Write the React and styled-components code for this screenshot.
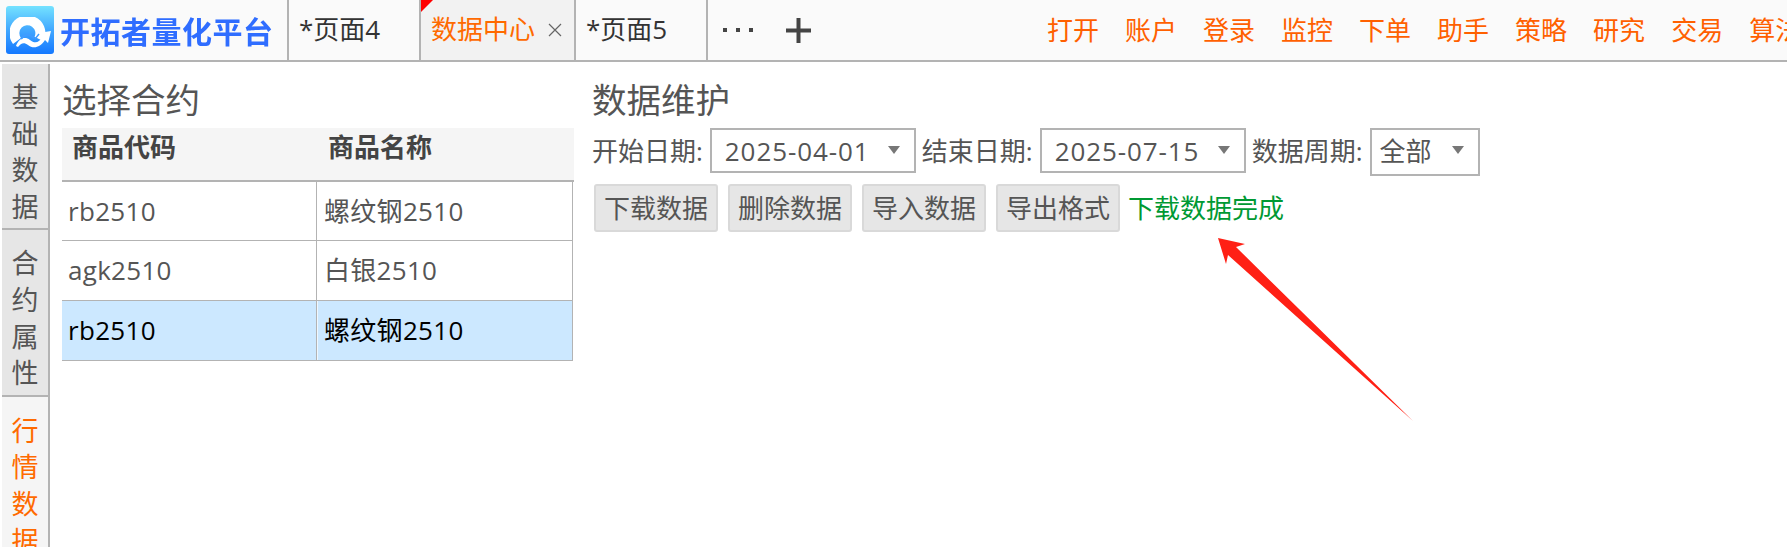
import React from "react";
import styled, { createGlobalStyle } from "styled-components";

const Global = createGlobalStyle`
  html, body { margin: 0; padding: 0; background: #fff; }
  body { width: 1787px; height: 547px; overflow: hidden; font-family: "Open Sans", "Noto Sans CJK SC", sans-serif; font-size: 26px; color: #555; }
  * { box-sizing: border-box; }
`;

const Page = styled.div`
  width: 1787px; height: 547px; overflow: hidden; display: flex; flex-direction: column; position: relative;
`;
const TopBar = styled.div`
  height: 62px; flex: none; display: flex; align-items: stretch; background: #fafafa; border-bottom: 2px solid #b3b3b3; overflow: hidden;
`;
const Brand = styled.div`
  width: 287px; flex: none; display: flex; align-items: center; padding-left: 6px; gap: 6px;
`;
const BrandName = styled.span`
  font-size: 30px; line-height: 40px; font-weight: 700; letter-spacing: 0.5px; white-space: nowrap; filter: blur(0.7px);
  font-family: "Noto Sans CJK SC", sans-serif;
  color: #2f6dff;
`;
const Tab = styled.div`
  width: ${p => p.$w}px; flex: none; position: relative; display: flex; align-items: center; padding-left: 10px; border-left: 2px solid #b3b3b3;
  background: ${p => p.$active ? "#f2f2f2" : "#fafafa"}; color: ${p => p.$active ? "#ff6a00" : "#333"}; line-height: 60px; padding-bottom: 2px; white-space: nowrap;
`;
const Corner = styled.i`
  position: absolute; left: 0; top: 0; width: 0; height: 0; border-top: 12px solid #f00; border-right: 12px solid transparent;
`;
const Close = styled.svg`
  width: 14px; height: 14px; margin-left: 13px; margin-top: 2px; flex: none;
`;
const TabTools = styled.div`
  width: 341px; flex: none; border-left: 2px solid #b3b3b3; display: flex; align-items: center; padding-left: 15px; gap: 33px;
`;
const Menu = styled.nav`
  display: flex; gap: 26px; flex: none; align-items: center; color: #ff6000; white-space: nowrap; padding-bottom: 2px;
`;
const Body = styled.div`
  flex: 1; display: flex; padding: 2px 0 0 2px; min-height: 0;
`;
const Sidebar = styled.div`
  width: 48px; flex: none; border-right: 2px solid #b3b3b3; display: flex; flex-direction: column; overflow: hidden;
`;
const SideItem = styled.div`
  flex: none; display: flex; flex-direction: column; align-items: center; padding: ${p => p.$active ? "16px 0 0" : "15px 0 3px"};
  background: ${p => p.$active ? "#f5f5f5" : "#e6e6e6"}; color: ${p => p.$active ? "#ff6a00" : "#555"};
  font-size: 27px; line-height: 36.6px; border-bottom: ${p => p.$active ? "0" : "2px solid #b3b3b3"};
`;
const Main = styled.div`
  flex: 1; display: flex; padding: 0 0 0 12px; gap: 18px; align-items: flex-start;
`;
const Left = styled.section` width: 512px; flex: none; `;
const Right = styled.section` flex: 1; `;
const Title = styled.h2`
  margin: 0; font-size: 34.5px; font-weight: 400; line-height: 72px; height: 64px; color: #555;
`;
const Table = styled.div` width: 512px; `;
const Head = styled.div`
  display: grid; grid-template-columns: 255px 257px; height: 54px; background: #f5f5f5; border-bottom: 2px solid #b3b3b3; font-weight: 700; color: #444; line-height: 38px;
  & > span { padding-left: 10px; }
  & > span + span { padding-left: 11px; }
`;
const Row = styled.div`
  display: grid; grid-template-columns: 254px 257px; width: 511px; height: ${p => p.$h || 60}px; line-height: 58px; border-bottom: 1px solid #b3b3b3; border-right: 1px solid #b3b3b3; letter-spacing: 0.3px;
  background: ${p => p.$sel ? "#cce8ff" : "#fff"}; color: ${p => p.$sel ? "#000" : "#555"};
`;
const Cell = styled.div`
  padding-left: 6px;
`;
const NameCell = styled.div`
  padding-left: 7px; border-left: 1px solid #b3b3b3;
  box-shadow: ${p => p.$sel ? "inset 1px 0 0 #eef7ff" : "none"};
`;
const Filters = styled.div`
  display: flex; align-items: flex-start; height: 56px;
`;
const Label = styled.span`
  line-height: 46px; margin: ${p => p.$m || "0"}; white-space: nowrap;
`;
const Select = styled.div`
  width: ${p => p.$w}px; height: ${p => p.$h || 45}px; flex: none; border: 2px solid #b3b3b3; background: #fff; position: relative; line-height: 42px; padding-left: ${p => p.$pl || 13}px; color: #555; letter-spacing: ${p => p.$ls || 0}px; margin-left: ${p => p.$ml || 0}px;
`;
const Caret = styled.i`
  position: absolute; right: 14px; top: 16px; width: 0; height: 0; border-left: 6px solid transparent; border-right: 6px solid transparent; border-top: 8px solid #777;
`;
const Actions = styled.div`
  display: flex; align-items: center; gap: 10px; padding-left: 2px;
`;
const Btn = styled.button`
  width: 124px; height: 48px; padding: 0; border: 2px solid #d9d9d9; border-radius: 3px; background: #e6e6e6; color: #555; font: inherit; line-height: 42px;
`;
const Status = styled.span` color: #009933; margin-left: -2px; line-height: 48px; `;
const ArrowMark = styled.svg`
  position: absolute; left: 0; top: 0; width: 1787px; height: 547px; pointer-events: none;
`;

const sideItems = [
  { t: "基础数据" },
  { t: "合约属性" },
  { t: "行情数据", active: true },
];
const menu = ["打开", "账户", "登录", "监控", "下单", "助手", "策略", "研究", "交易", "算法"];

function Logo() {
  return (
    <svg width="48" height="48" viewBox="0 0 48 48" style={{ flex: "none" }}>
      <defs>
        <linearGradient id="lg" x1="0" y1="0" x2="0" y2="1">
          <stop offset="0" stopColor="#74e2ff" />
          <stop offset="0.5" stopColor="#42a8ff" />
          <stop offset="1" stopColor="#1478ff" />
        </linearGradient>
        <filter id="soft" x="-10%" y="-10%" width="120%" height="120%"><feGaussianBlur stdDeviation="0.6" /></filter>
      </defs>
      <rect width="48" height="48" rx="3" fill="url(#lg)" />
      <g filter="url(#soft)">
        <path d="M11 35A13 13 0 1 1 33 33" fill="none" stroke="#fff" strokeWidth="10" />
        <path d="M10 40C13 32 19 30 24 34 29 38 33 37 37 30L33 27 45 25 42 37 39 34C34 42 27 43 22 39 18 36 15 37 12 41z" fill="#fff" />
        <path d="M15 33C19 27 24 28 28 32" fill="none" stroke="#3f9cff" strokeWidth="2" />
        <path d="M29 33L33 28" fill="none" stroke="#3f9cff" strokeWidth="1.500" />
      </g>
    </svg>
  );
}

export default function App() {
  return (
    <>
      <Global />
      <Page>
        <TopBar>
          <Brand>
            <Logo />
            <BrandName>开拓者量化平台</BrandName>
          </Brand>
          <Tab $w={132}>*页面4</Tab>
          <Tab $w={155} $active>
            <Corner />
            数据中心
            <Close viewBox="0 0 14 14"><path d="M1 1l12 12M13 1L1 13" stroke="#666" strokeWidth="1.2" /></Close>
          </Tab>
          <Tab $w={132}>*页面5</Tab>
          <TabTools>
            <svg width="30" height="6" viewBox="0 0 30 6"><g fill="#444"><rect x="0" y="1" width="4" height="4" /><rect x="13" y="1" width="4" height="4" /><rect x="26" y="1" width="4" height="4" /></g></svg>
            <svg width="25" height="25" viewBox="0 0 25 25"><path d="M10.5 0h4v10.5H25v4H14.500V25h-4V14.500H0v-4h10.500z" fill="#444" /></svg>
          </TabTools>
          <Menu>{menu.map(m => <span key={m}>{m}</span>)}</Menu>
        </TopBar>
        <Body>
          <Sidebar>
            {sideItems.map(s => (
              <SideItem key={s.t} $active={s.active}>
                {[...s.t].map((c, i) => <span key={i}>{c}</span>)}
              </SideItem>
            ))}
          </Sidebar>
          <Main>
            <Left>
              <Title>选择合约</Title>
              <Table>
                <Head><span>商品代码</span><span>商品名称</span></Head>
                <Row $h={59}><Cell>rb2510</Cell><NameCell>螺纹钢2510</NameCell></Row>
                <Row><Cell>agk2510</Cell><NameCell>白银2510</NameCell></Row>
                <Row $sel><Cell>rb2510</Cell><NameCell $sel>螺纹钢2510</NameCell></Row>
              </Table>
            </Left>
            <Right>
              <Title>数据维护</Title>
              <Filters>
                <Label>开始日期:</Label>
                <Select $w={206} $ls={0.9} $ml={7}>2025-04-01<Caret /></Select>
                <Label $m="0 7px 0 6px">结束日期:</Label>
                <Select $w={206} $ls={0.9}>2025-07-15<Caret /></Select>
                <Label $m="0 7px 0 6px">数据周期:</Label>
                <Select $w={110} $h={48} $pl={8}>全部<Caret /></Select>
              </Filters>
              <Actions>
                <Btn>下载数据</Btn>
                <Btn>删除数据</Btn>
                <Btn>导入数据</Btn>
                <Btn>导出格式</Btn>
                <Status>下载数据完成</Status>
              </Actions>
            </Right>
          </Main>
        </Body>
        <ArrowMark viewBox="0 0 1787 547">
          <path d="M1218 238L1245 244 1236 247 1413 421 1228 255 1226 264z" fill="#ff2015" />
        </ArrowMark>
      </Page>
    </>
  );
}
